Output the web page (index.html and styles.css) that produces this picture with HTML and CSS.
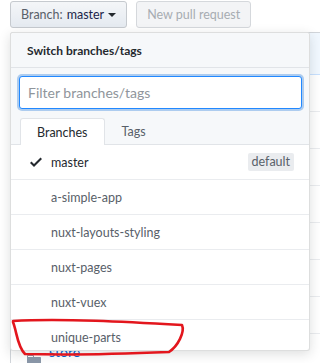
FILE: index.html
```html
<!DOCTYPE html>
<html>
<head>
    <title>Switch branches</title>
    <link rel="stylesheet" href="styles.css">
</head>
<body>
    <div class="toolbar">
        <button class="btn branch-btn">
            <span class="muted">Branch:</span> <span class="current">master</span>
            <span class="caret"></span>
        </button>
        <button class="btn" disabled>New pull request</button>
    </div>

    <div class="repo-area">
        <!-- file list sitting behind the menu -->
        <div class="file-list">
            <div class="file-head"></div>
            <div class="file-row"></div>
            <div class="file-row"></div>
            <div class="file-row"></div>
            <div class="file-row"></div>
            <div class="file-row"></div>
            <div class="file-row"></div>
            <div class="file-row"></div>
            <div class="file-row">
                <svg class="folder" width="14" height="16" viewBox="0 0 14 16"><path fill="#8b98a9" d="M13 4H7V3c0-.66-.31-1-1-1H1c-.55 0-1 .45-1 1v10c0 .55.45 1 1 1h12c.55 0 1-.45 1-1V5c0-.55-.45-1-1-1zM6 4H1V3h5v1z"/></svg>
                <a href="#" class="file-link">store</a>
            </div>
        </div>

        <div class="menu">
            <div class="menu-header">Switch branches/tags</div>
            <div class="menu-filter">
                <input type="text" class="filter-input" placeholder="Filter branches/tags">
                <div class="tabs">
                    <span class="tab selected">Branches</span>
                    <span class="tab">Tags</span>
                </div>
            </div>
            <div class="menu-list">
                <div class="menu-item active">
                    <svg class="check" width="12" height="16" viewBox="0 0 12 16"><path fill="#24292e" fill-rule="evenodd" d="M12 5l-8 8-4-4 1.5-1.5L4 10l6.5-6.5L12 5z"/></svg>
                    <span class="name">master</span>
                    <span class="label">default</span>
                </div>
                <div class="menu-item"><span class="name">a-simple-app</span></div>
                <div class="menu-item"><span class="name">nuxt-layouts-styling</span></div>
                <div class="menu-item"><span class="name">nuxt-pages</span></div>
                <div class="menu-item"><span class="name">nuxt-vuex</span></div>
                <div class="menu-item"><span class="name">unique-parts</span></div>
            </div>
        </div>
    </div>

    <!-- hand drawn marker around the branch -->
    <svg class="scribble" width="320" height="363" viewBox="0 0 320 363">
        <path d="M13 321 C60 318 130 322 182 325 C185 332 178 346 169 352 C120 354 60 355 25 354 C17 346 17 332 13 322"
              fill="none" stroke="#e3161d" stroke-width="2.6" stroke-linecap="round" stroke-linejoin="round"/>
    </svg>
</body>
</html>
```

FILE: styles.css
```css
/* Branch switcher menu */

body {
    font-family: Lato, "Noto Sans", Arial, sans-serif;
    font-size: 12px;
    color: #24292e;
    background-color: #fff;
    margin: 0;
    padding: 0;
    width: 320px;
    height: 363px;
    overflow: hidden;
    position: relative;
}

.toolbar {
    display: flex;
    gap: 9px;
    padding: 1px 10px 0;
}

.btn {
    font-family: inherit;
    font-size: 12.5px;
    height: 27px;
    padding: 0 10px;
    border: 1px solid #c6cacf;
    border-radius: 3px;
    background-image: linear-gradient(-180deg, #f4f6f8 0%, #e6ebf1 90%);
    color: #24292e;
    display: flex;
    align-items: center;
    gap: 4px;
}

.branch-btn .muted {
    color: #586069;
}

.branch-btn .current {
    color: #1b1f4a;
}

.caret {
    width: 0;
    height: 0;
    border-left: 4px solid transparent;
    border-right: 4px solid transparent;
    border-top: 4px solid #24292e;
}

.btn[disabled] {
    color: #a7acb2;
    background-image: none;
    background-color: #f3f4f6;
    border-color: #d5d8dc;
}

.repo-area {
    position: relative;
    margin-top: 4px;
}

.file-list {
    margin-left: 10px;
    width: 400px;
    border: 1px solid #d1d5da;
    border-radius: 3px;
}

.file-head {
    height: 41px;
    background-color: #f1f8ff;
    border-bottom: 1px solid #c8e1ff;
}

.file-row {
    height: 36px;
    border-top: 1px solid #eaecef;
    display: flex;
    align-items: flex-start;
    padding-left: 16px;
    gap: 8px;
}

.file-row:nth-child(2) {
    border-top: none;
}

.folder {
    margin-top: 19px;
}

.file-link {
    margin-top: 9px;
    color: #0366d6;
    text-decoration: none;
    font-size: 14px;
}

.menu {
    position: absolute;
    top: 0;
    left: 10px;
    width: 298px;
    background-color: #fff;
    border: 1px solid rgba(27, 31, 35, 0.15);
    border-radius: 3px;
    box-shadow: 0 3px 12px rgba(27, 31, 35, 0.15);
}

.menu-header {
    height: 34px;
    display: flex;
    align-items: center;
    padding-left: 16px;
    font-weight: 700;
    background-color: #f6f8fa;
    border-bottom: 1px solid #e1e4e8;
    border-radius: 3px 3px 0 0;
}

.menu-filter {
    background-color: #f6f8fa;
    padding: 8px 7px 0 8px;
    border-bottom: 1px solid #e1e4e8;
}

.filter-input {
    display: block;
    box-sizing: border-box;
    width: 283px;
    height: 33px;
    padding: 0 8px;
    font-family: inherit;
    font-size: 14px;
    border: 1px solid #2188ff;
    border-radius: 3px;
    box-shadow: 0 0 0 2px rgba(3, 102, 214, 0.3);
    outline: none;
}

.filter-input::placeholder {
    color: #8f959b;
}

.tabs {
    display: flex;
    margin-top: 9px;
    padding-left: 1px;
}

.tab {
    height: 25px;
    display: flex;
    align-items: center;
    padding: 0 16px;
    font-size: 12.5px;
    color: #586069;
    border: 1px solid transparent;
    border-bottom: none;
    margin-bottom: -1px;
}

.tab.selected {
    color: #24292e;
    background-color: #fff;
    border-color: #e1e4e8;
    border-radius: 3px 3px 0 0;
    height: 26px;
}

.menu-list {
    max-height: 205px;
    overflow: hidden;
}

.menu-item {
    height: 34px;
    display: flex;
    align-items: center;
    padding-left: 40px;
    padding-right: 15px;
    border-bottom: 1px solid #eaecef;
    font-size: 12.5px;
    color: #586069;
    position: relative;
}

.menu-item.active {
    color: #24292e;
}

.check {
    position: absolute;
    left: 19px;
    top: 9px;
}

.name {
    flex: 1;
}

.label {
    background-color: #eaecef;
    color: #586069;
    padding: 0 4px;
    height: 18px;
    line-height: 18px;
    border-radius: 2px;
    font-size: 12.5px;
}

.scribble {
    position: absolute;
    top: 0;
    left: 0;
    pointer-events: none;
}
```
